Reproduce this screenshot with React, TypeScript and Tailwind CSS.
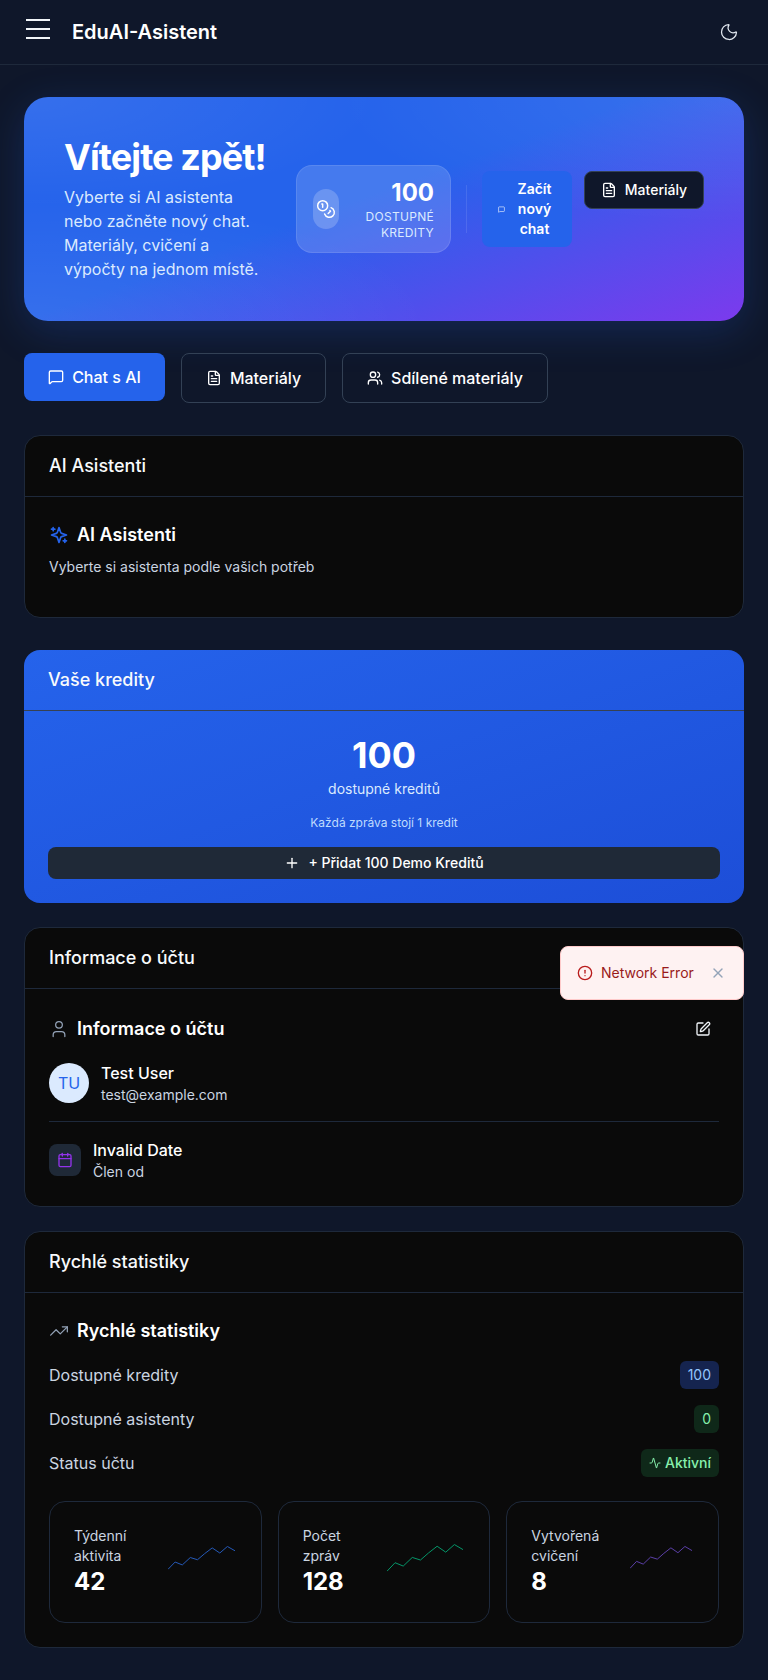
import type { ReactNode } from "react";
import {
  Activity,
  AlertCircle,
  Calendar,
  Coins,
  FileText,
  MessageSquare,
  Moon,
  Plus,
  SquarePen,
  TrendingUp,
  User,
  Users,
  X,
} from "lucide-react";

const sparkPoints =
  "0,24.3 7.1,16.7 14.3,19.7 22.3,12 29.5,14.3 36.6,8 44.2,2 51.8,7.3 59.4,0.5 67,5";

function Sparkline({ width, height, color }: { width: number; height: number; color: string }) {
  return (
    <svg
      width={width}
      height={height}
      viewBox="0 0 67 25"
      preserveAspectRatio="none"
      className="shrink-0 mb-[9px] mr-[2px]"
    >
      <polyline
        points={sparkPoints}
        fill="none"
        stroke={color}
        strokeWidth="1"
        vectorEffect="non-scaling-stroke"
      />
    </svg>
  );
}

// Star with plus signs top-left and bottom-right, as in the reference
function SparkIcon() {
  return (
    <svg
      width="20"
      height="20"
      viewBox="0 0 24 24"
      fill="none"
      stroke="#2563eb"
      strokeWidth="2"
      strokeLinecap="round"
      strokeLinejoin="round"
    >
      <path d="m12 3-1.912 5.813a2 2 0 0 1-1.275 1.275L3 12l5.813 1.912a2 2 0 0 1 1.275 1.275L12 21l1.912-5.813a2 2 0 0 1 1.275-1.275L21 12l-5.813-1.912a2 2 0 0 1-1.275-1.275L12 3Z" />
      <path d="M5 3v4" />
      <path d="M19 17v4" />
      <path d="M3 5h4" />
      <path d="M17 19h4" />
    </svg>
  );
}

function Card({ title, children }: { title: string; children: ReactNode }) {
  return (
    <section className="rounded-2xl border border-[#1e293b] bg-[#0a0a0a]">
      <div className="border-b border-[#1e293b] px-6 py-4 text-lg font-medium leading-7 text-[#f8fafc]">
        {title}
      </div>
      <div className="p-6">{children}</div>
    </section>
  );
}

function StatRow({ label, children }: { label: string; children: ReactNode }) {
  return (
    <div className="mt-4 flex h-7 items-center justify-between text-base text-[#cbd5e1]">
      <span>{label}</span>
      {children}
    </div>
  );
}

function MiniStat({
  label,
  value,
  spark,
}: {
  label: string;
  value: string;
  spark: ReactNode;
}) {
  return (
    <div className="flex items-center justify-between rounded-2xl border border-[#1e293b] p-6">
      <div>
        <div className="w-min text-sm leading-5 text-[#cbd5e1]">{label}</div>
        <div className="text-2xl font-bold leading-8 text-white">{value}</div>
      </div>
      {spark}
    </div>
  );
}

export default function App() {
  return (
    <div className="relative min-h-[1680px] bg-[#0f172a] font-[Inter,sans-serif] text-white">
      {/* Top bar */}
      <header className="flex h-[65px] items-center border-b border-[#1e293b] pl-[26px] pr-[29px]">
        <div className="flex w-6 flex-col gap-[7px] pb-[6px]">
          <span className="h-[2px] bg-[#f1f5f9]" />
          <span className="h-[2px] bg-[#f1f5f9]" />
          <span className="h-[2px] bg-[#f1f5f9]" />
        </div>
        <h1 className="ml-[22px] text-xl font-semibold">EduAI-Asistent</h1>
        <Moon size={20} strokeWidth={1.5} className="ml-auto text-[#e2e8f0]" />
      </header>

      <main className="px-6 pt-8 pb-[31px]">
        {/* Hero */}
        <section className="flex h-[224px] items-center gap-6 rounded-3xl bg-[radial-gradient(ellipse_at_top_right,rgba(255,255,255,0.09),transparent_40%),radial-gradient(ellipse_at_bottom_left,rgba(255,255,255,0.08),transparent_40%),radial-gradient(ellipse_at_top_left,rgba(255,255,255,0.08),transparent_35%),linear-gradient(160deg,#2563eb_46%,#7c3aed_100%)] px-10 shadow-[0_10px_40px_rgba(37,99,235,0.22)]">
          <div className="min-w-0 flex-1">
            <h2 className="text-4xl font-bold leading-10 tracking-tight">Vítejte zpět!</h2>
            <p className="mt-2 text-base leading-6 text-[#dbeafe]">
              Vyberte si AI asistenta nebo začněte nový chat. Materiály, cvičení a výpočty na jednom místě.
            </p>
          </div>
          <div className="flex shrink-0 items-center">
            <div className="flex h-[88px] w-[155px] items-center justify-between rounded-2xl border border-white/10 bg-white/15 px-4">
              <div className="flex h-10 w-[26px] items-center justify-center rounded-full bg-white/20">
                <Coins size={20} strokeWidth={1.75} className="text-white" />
              </div>
              <div className="w-[90px] text-right">
                <div className="text-2xl font-bold leading-8">100</div>
                <div className="text-xs uppercase leading-4 tracking-wide text-[#dbeafe]">Dostupné kredity</div>
              </div>
            </div>
            <div className="mx-[15px] h-12 w-px bg-white/10" />
            <div className="flex items-start gap-3">
              <button className="flex w-[90px] items-center gap-2 rounded-lg bg-[#2563eb] px-4 py-2 text-sm font-semibold leading-5">
                <MessageSquare size={7} className="shrink-0" />
                <span className="text-center">Začít nový chat</span>
              </button>
              <button className="flex h-[38px] w-[120px] items-center justify-center gap-2 rounded-lg border border-[#334155] bg-[#0f172a] text-sm font-medium">
                <FileText size={16} />
                Materiály
              </button>
            </div>
          </div>
        </section>

        {/* Tabs */}
        <nav className="mt-8 flex items-start gap-4 text-base font-medium">
          <button className="flex h-12 w-[141px] items-center justify-center gap-2 rounded-lg bg-[#2563eb]">
            <MessageSquare size={16} />
            Chat s AI
          </button>
          <button className="flex h-[50px] w-[145px] items-center justify-center gap-2 rounded-lg border border-[#334155]">
            <FileText size={16} />
            Materiály
          </button>
          <button className="flex h-[50px] w-[206px] items-center justify-center gap-2 rounded-lg border border-[#334155]">
            <Users size={16} />
            Sdílené materiály
          </button>
        </nav>

        <div className="mt-8">
          <Card title="AI Asistenti">
            <div className="flex items-center gap-2 text-lg font-semibold leading-7">
              <SparkIcon />
              AI Asistenti
            </div>
            <p className="mt-2 mb-4 text-sm leading-5 text-[#cbd5e1]">Vyberte si asistenta podle vašich potřeb</p>
          </Card>
        </div>

        {/* Credits */}
        <section className="mt-8 rounded-2xl bg-gradient-to-br from-[#2563eb] to-[#1d4ed8]">
          <div className="border-b border-[#374151] px-6 py-4 text-lg font-medium leading-7 text-[#f8fafc]">
            Vaše kredity
          </div>
          <div className="p-6 text-center">
            <div className="text-4xl font-bold leading-10">100</div>
            <div className="mt-1 text-sm leading-5 text-[#dbeafe]">dostupné kreditů</div>
            <div className="mt-4 text-xs leading-4 text-[#bfdbfe]">Každá zpráva stojí 1 kredit</div>
            <button className="mt-4 flex h-8 w-full items-center justify-center gap-2 rounded-lg bg-[#1f2937] text-sm font-medium">
              <Plus size={16} />
              + Přidat 100 Demo Kreditů
            </button>
          </div>
        </section>

        <div className="mt-6">
          <Card title="Informace o účtu">
            <div className="flex h-8 items-center text-lg font-semibold leading-7">
              <User size={20} strokeWidth={1.5} className="mr-2 text-[#94a3b8]" />
              Informace o účtu
              <SquarePen size={16} className="ml-auto mr-2 text-[#f1f5f9]" />
            </div>
            <div className="mt-4 flex items-center gap-3 border-b border-[#1e293b] pb-4">
              <div className="flex h-10 w-10 items-center justify-center rounded-full bg-[#dbeafe] text-base text-[#2563eb]">
                TU
              </div>
              <div>
                <div className="text-base font-medium leading-6">Test User</div>
                <div className="text-sm leading-5 text-[#cbd5e1]">test@example.com</div>
              </div>
            </div>
            <div className="mt-4 flex items-center gap-3">
              <div className="flex h-8 w-8 items-center justify-center rounded-lg bg-[#1f2937]">
                <Calendar size={16} className="text-[#9333ea]" />
              </div>
              <div>
                <div className="text-base font-medium leading-6">Invalid Date</div>
                <div className="text-sm leading-5 text-[#cbd5e1]">Člen od</div>
              </div>
            </div>
          </Card>
        </div>

        <div className="mt-6">
          <Card title="Rychlé statistiky">
            <div className="flex items-center gap-2 text-lg font-semibold leading-7">
              <TrendingUp size={20} strokeWidth={1.5} className="text-[#94a3b8]" />
              Rychlé statistiky
            </div>
            <StatRow label="Dostupné kredity">
              <span className="rounded-md bg-[#15244f] px-2 py-1 text-sm leading-5 text-[#93c5fd]">100</span>
            </StatRow>
            <StatRow label="Dostupné asistenty">
              <span className="rounded-md bg-[#0f2819] px-2 py-1 text-sm leading-5 text-[#86efac]">0</span>
            </StatRow>
            <StatRow label="Status účtu">
              <span className="flex items-center gap-1 rounded-md bg-[#0f2819] px-2 py-1 text-sm font-medium leading-5 text-[#86efac]">
                <Activity size={12} />
                Aktivní
              </span>
            </StatRow>
            <div className="mt-6 grid grid-cols-3 gap-4">
              <MiniStat label="Týdenní aktivita" value="42" spark={<Sparkline width={67} height={24} color="#2559b8" />} />
              <MiniStat label="Počet zpráv" value="128" spark={<Sparkline width={76} height={28} color="#059669" />} />
              <MiniStat label="Vytvořená cvičení" value="8" spark={<Sparkline width={62} height={23} color="#5b3fa8" />} />
            </div>
          </Card>
        </div>
      </main>

      {/* Toast */}
      <div className="absolute top-[946px] right-6 flex h-[54px] w-[184px] items-center gap-2 rounded-lg border border-[#fecaca] bg-[#fef2f2] pl-4 text-sm text-[#991b1b]">
        <AlertCircle size={16} className="text-[#b91c1c]" />
        Network Error
        <X size={16} className="ml-2 text-[#94a3b8]" />
      </div>
    </div>
  );
}
